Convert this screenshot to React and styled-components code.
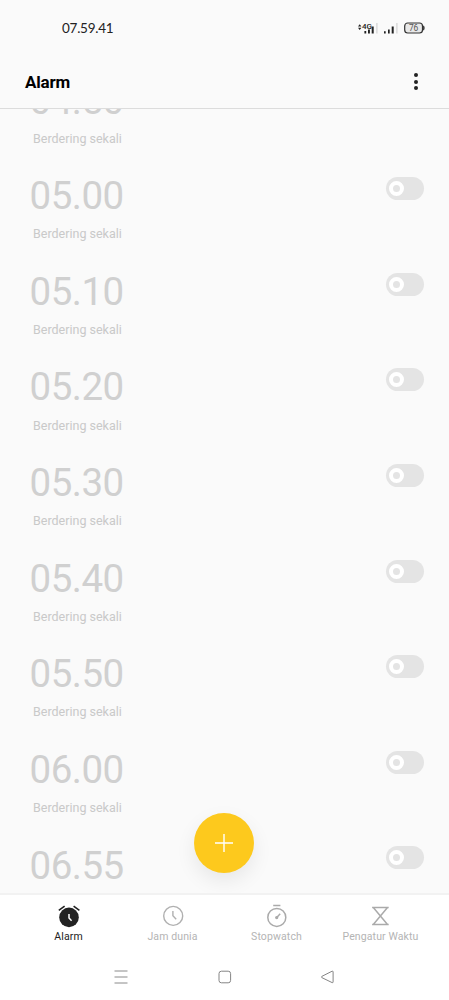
import React from 'react'
import styled, { createGlobalStyle, css } from 'styled-components'

const alarms = ['04.50', '05.00', '05.10', '05.20', '05.30', '05.40', '05.50', '06.00', '06.55']

const SignalIcon = () => (
  <svg width="72" height="16" viewBox="0 0 72 16">
    <path d="M1 6.4 2.7 4.2l1.7 2.2zM1 7.8 2.7 10l1.7-2.2z" fill="#222" />
    <text x="5" y="9" fontSize="8" fontWeight="500" fill="#222">
      4G
    </text>
    <path d="M7.4 11h1.8v2.4H7.4zM11 9.4h1.9v4H11zM14.7 6.4h2v7h-2z" fill="#222" />
    <path d="M19.2 3h1.4v10.4h-1.4z" fill="#d8d8d8" />
    <path d="M27 11.2h1.7v2.2H27zM31 9.4h1.7v4H31zM34.7 6.4h2v7h-2z" fill="#222" />
    <path d="M39.2 3h1.4v10.4h-1.4z" fill="#d8d8d8" />
    <rect x="47.7" y="3" width="17.8" height="10" rx="3" fill="#e8e8e8" stroke="#333" strokeWidth="1.2" />
    <path d="M66.6 5.8q1.3 2.2 0 4.4z" fill="#222" stroke="#222" strokeWidth=".7" />
    <text x="56.6" y="11" fontSize="8.4" textAnchor="middle" fill="#555">
      76
    </text>
  </svg>
)

const AlarmIcon = () => (
  <svg width="26" height="24" viewBox="0 0 26 24">
    <circle cx="13" cy="13.4" r="9.8" fill="#222" />
    <path d="M2.8 6.4 8.6 2.2M17.6 2.2l5.8 4.2" stroke="#222" strokeWidth="1.6" fill="none" />
    <path d="M13 10v4l2.6 2.8" stroke="#fff" strokeWidth="1.5" fill="none" />
  </svg>
)

const ClockIcon = () => (
  <svg width="26" height="24" viewBox="0 0 26 24" fill="none" stroke="#b0b0b0" strokeWidth="1.4">
    <circle cx="13.2" cy="11.9" r="9.5" />
    <path d="M12.9 7v4.8l3.3 3.4" />
  </svg>
)

const StopwatchIcon = () => (
  <svg width="26" height="24" viewBox="0 0 26 24" fill="none" stroke="#aaa" strokeWidth="1.5">
    <circle cx="12.8" cy="13.4" r="9" />
    <path d="M9.2 1.5h7.2" />
    <path d="m12.8 13.4 3.4-3.6" />
    <circle cx="12.7" cy="13.6" r=".9" fill="#aaa" />
  </svg>
)

const TimerIcon = () => (
  <svg width="26" height="24" viewBox="0 0 26 24" fill="none" stroke="#aaa" strokeWidth="1.5">
    <path d="M4.1 3.6h16.6M4.1 20.4h16.6M5.5 3.8l13.8 16.4M19.3 3.8 5.5 20.2" />
  </svg>
)

const tabs = [
  { label: 'Alarm', Icon: AlarmIcon, active: true },
  { label: 'Jam dunia', Icon: ClockIcon },
  { label: 'Stopwatch', Icon: StopwatchIcon },
  { label: 'Pengatur Waktu', Icon: TimerIcon },
]

const App = () => (
  <Screen>
    <GlobalStyle />
    <StatusBar>
      <StatusTime>07.59.41</StatusTime>
      <SignalIcon />
    </StatusBar>
    <Header>
      <Title>Alarm</Title>
      <MenuButton aria-label="Menu">
        <Dot />
        <Dot />
        <Dot />
      </MenuButton>
    </Header>
    <ListViewport>
      <AlarmList>
        {alarms.map(time => (
          <AlarmRow key={time}>
            <div>
              <Time>{time}</Time>
              <Repeat>Berdering sekali</Repeat>
            </div>
            <Toggle role="switch" aria-checked="false">
              <Knob />
            </Toggle>
          </AlarmRow>
        ))}
      </AlarmList>
      <AddButton aria-label="Tambah">
        <svg width="18" height="18" viewBox="0 0 18 18" stroke="#fff" strokeWidth="1.4">
          <path d="M0 9h18M9 0v18" />
        </svg>
      </AddButton>
    </ListViewport>
    <TabBar>
      {tabs.map(({ label, Icon, active }) => (
        <Tab key={label} $active={active}>
          <Icon />
          <TabLabel>{label}</TabLabel>
        </Tab>
      ))}
    </TabBar>
    <SystemNav>
      <svg width="14" height="14" viewBox="0 0 14 14" stroke="#8a8a8a" strokeWidth="1">
        <path d="M.5 1h13M.5 7h13M.5 13h13" />
      </svg>
      <svg width="14" height="14" viewBox="0 0 14 14" fill="none" stroke="#858585" strokeWidth="1">
        <rect x="1" y="1.2" width="11.6" height="11.6" rx="2.4" />
      </svg>
      <svg width="14" height="14" viewBox="0 0 14 14" fill="none" stroke="#858585" strokeWidth="1">
        <path d="M.8 6.4 11.1 1.2q1-.4 1 .7v10q0 1.1-1 .7L.8 7.6q-1-.6 0-1.2z" />
      </svg>
    </SystemNav>
  </Screen>
)

export default App

const GlobalStyle = createGlobalStyle`
  * {
    box-sizing: border-box;
  }
  body {
    margin: 0;
    font-family: Roboto, 'Liberation Sans', sans-serif;
  }
`

const Screen = styled.div`
  display: flex;
  flex-direction: column;
  height: 1000px;
  overflow: hidden;
  background: #fafafa;
`

const StatusBar = styled.div`
  display: flex;
  flex: none;
  align-items: center;
  justify-content: space-between;
  height: 56px;
  padding: 0 20px 0 62px;
`

const StatusTime = styled.span`
  font-family: Lato, sans-serif;
  font-size: 13.5px;
  letter-spacing: -0.25px;
  color: #222;
`

const Header = styled.header`
  display: flex;
  flex: none;
  align-items: center;
  justify-content: space-between;
  height: 53px;
  padding: 0 31px 1px 25px;
  border-bottom: 1px solid #dcdcdc;
`

const Title = styled.h1`
  margin: 0;
  font-size: 17px;
  font-weight: 700;
  letter-spacing: -0.2px;
  color: #000;
`

const MenuButton = styled.button`
  display: flex;
  flex-direction: column;
  gap: 2.5px;
  padding: 0;
  border: 0;
  background: none;
`

const Dot = styled.span`
  width: 4px;
  height: 4px;
  border-radius: 50%;
  background: #222;
`

const ListViewport = styled.main`
  position: relative;
  flex: none;
  height: 784px;
  overflow: hidden;
`

const AlarmList = styled.div`
  margin-top: -31.5px;
`

const AlarmRow = styled.div`
  display: flex;
  align-items: flex-start;
  justify-content: space-between;
  height: 95.64px;
  padding: 0 25px 0 29px;
`

const Time = styled.div`
  padding-left: 0.5px;
  font-size: 38.5px;
  line-height: 46px;
  letter-spacing: -0.5px;
  color: #d0d0d0;
`

const Repeat = styled.div`
  margin: 7.2px 0 0 4px;
  font-size: 12.5px;
  line-height: 16px;
  color: #c9c9c9;
`

const Toggle = styled.div`
  display: flex;
  align-items: center;
  width: 38px;
  height: 23px;
  margin-top: 3.9px;
  padding-left: 3px;
  border-radius: 12px;
  background: #e4e4e4;
`

const Knob = styled.span`
  width: 15px;
  height: 15px;
  border: 4px solid #fff;
  border-radius: 50%;
`

const AddButton = styled.button`
  position: absolute;
  bottom: 20.5px;
  left: 50%;
  display: flex;
  align-items: center;
  justify-content: center;
  width: 60px;
  height: 60px;
  margin-left: -30.5px;
  padding: 0;
  border: 0;
  border-radius: 50%;
  background: #fdc91d;
  box-shadow: 0 8px 20px rgba(0, 0, 0, 0.08);
`

const TabBar = styled.nav`
  display: flex;
  flex: none;
  height: 60px;
  padding: 9px 16.5px 0;
  border-top: 2px solid #f2f2f2;
  background: #fff;
`

const Tab = styled.div`
  display: flex;
  flex: 1;
  flex-direction: column;
  align-items: center;
  color: #b4b4b4;
  ${({ $active }) =>
    $active &&
    css`
      color: #222;
    `}
`

const TabLabel = styled.span`
  margin-top: 2px;
  font-size: 10.5px;
  line-height: 13px;
  letter-spacing: 0.12px;
  white-space: nowrap;
`

const SystemNav = styled.div`
  display: flex;
  flex: 1;
  justify-content: center;
  gap: 89.3px;
  padding-top: 17px;
  background: #fff;
`
